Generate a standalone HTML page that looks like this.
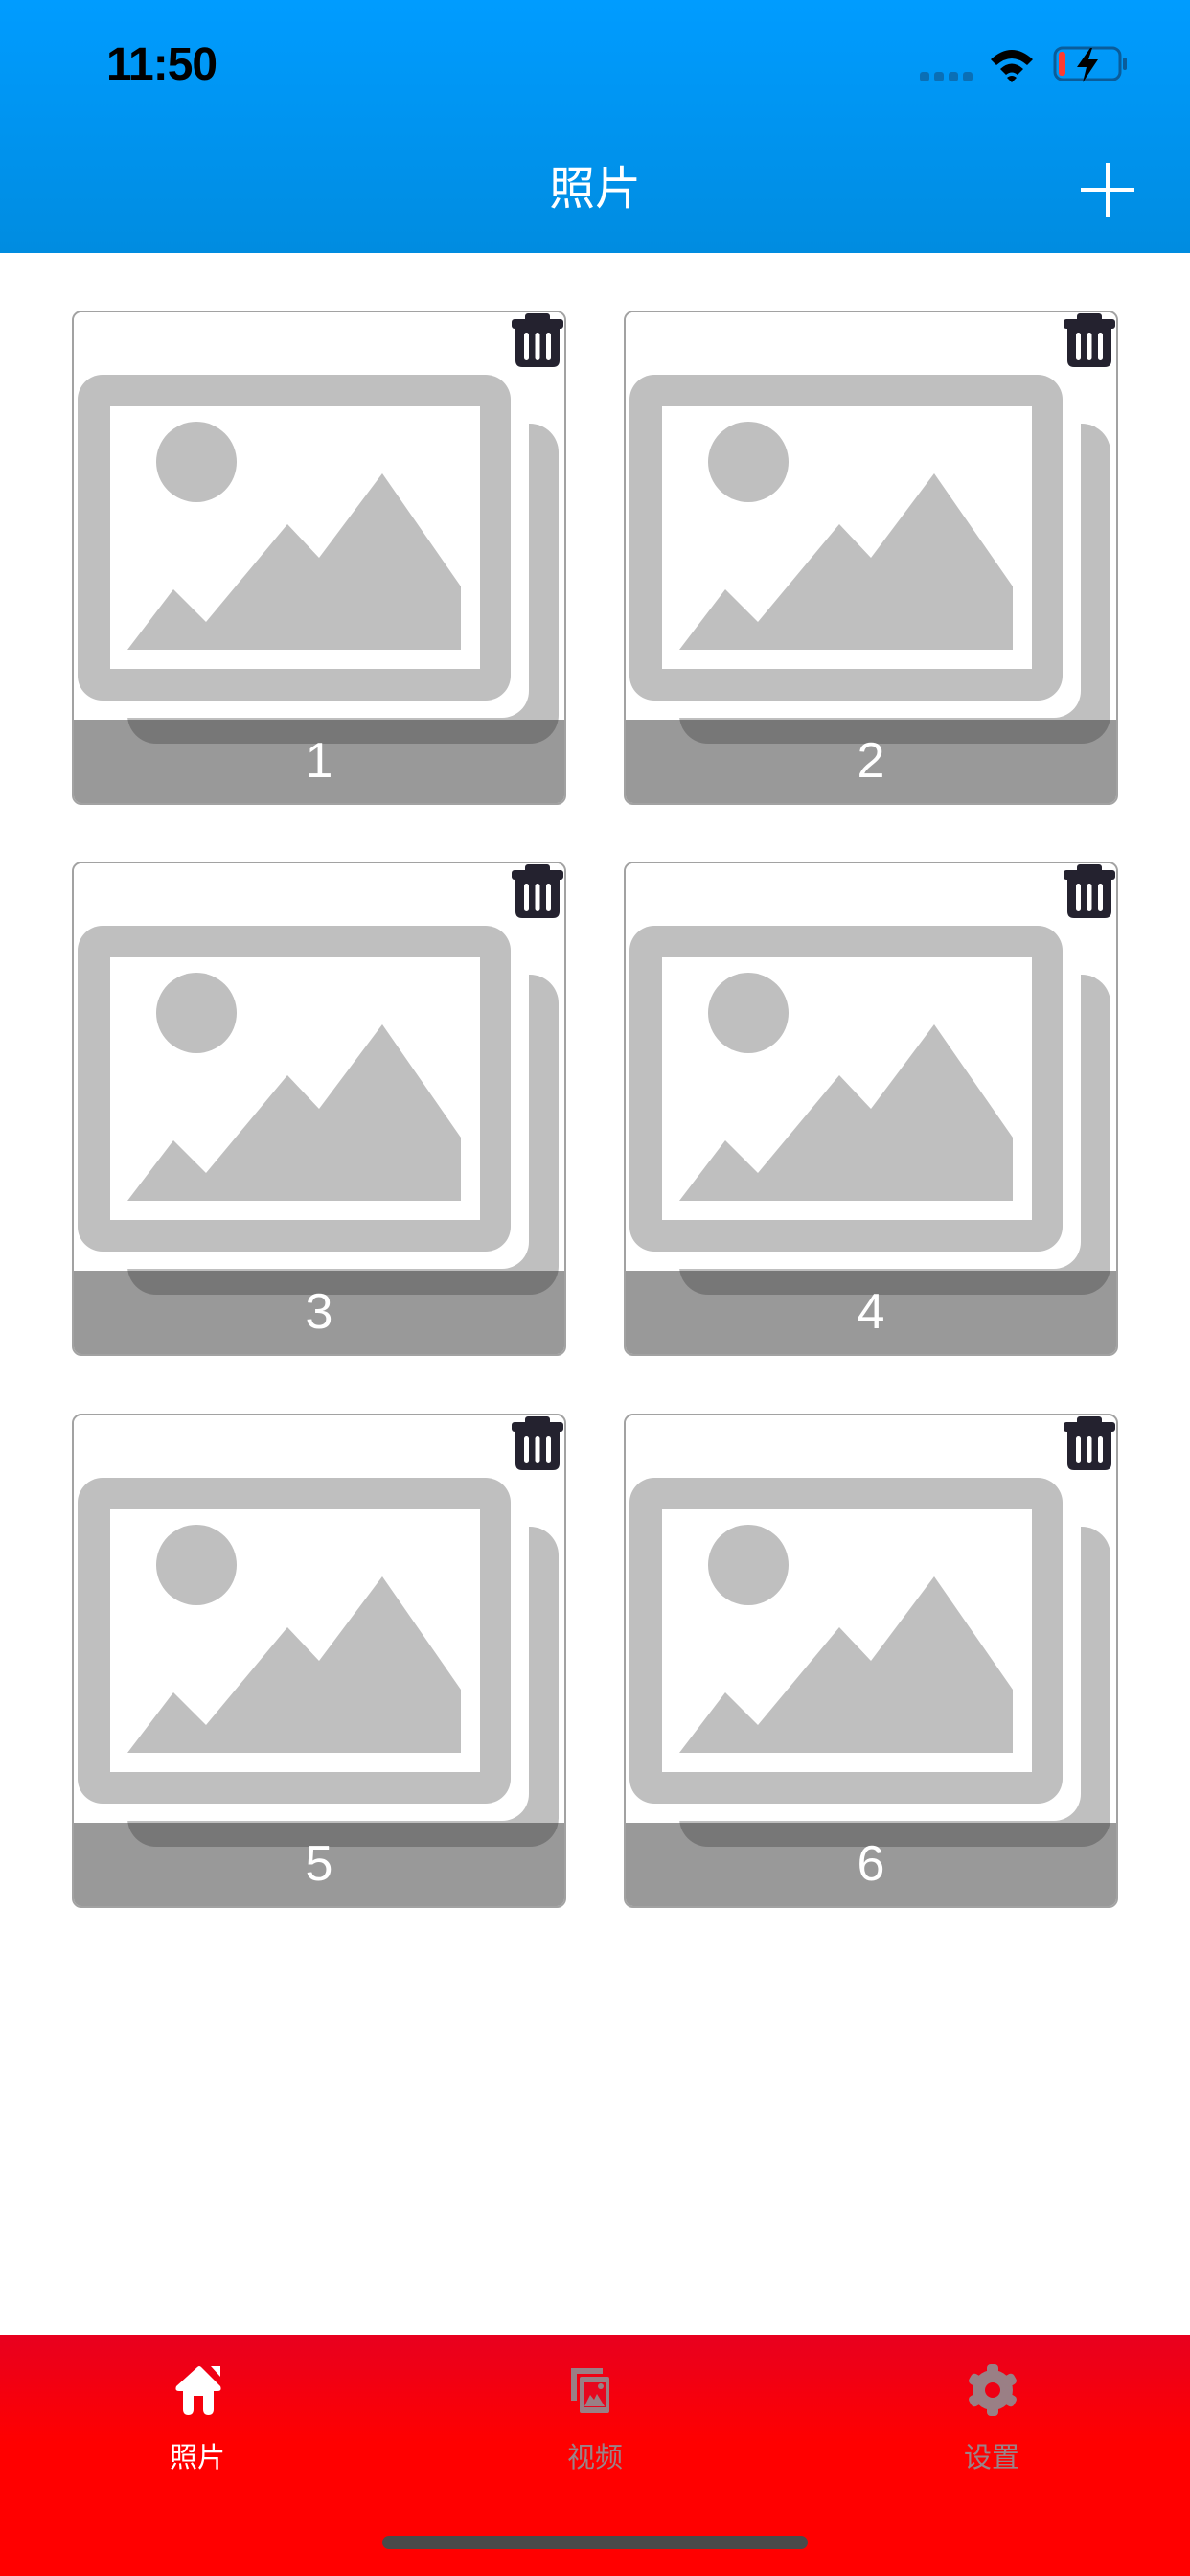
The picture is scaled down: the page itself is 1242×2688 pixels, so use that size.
<!DOCTYPE html>
<html><head><meta charset="utf-8"><style>
*{margin:0;padding:0;box-sizing:border-box}
body{width:1242px;height:2688px;position:relative;background:#fff;overflow:hidden;font-family:"Liberation Sans","Noto Sans CJK SC",sans-serif}
.hdr{position:absolute;left:0;top:0;width:1242px;height:264px;background:linear-gradient(#009cff,#008ce0)}
.time{position:absolute;left:111px;top:40px;font-size:48px;font-weight:bold;color:#000;letter-spacing:-1px}
.title{position:absolute;left:0;width:1242px;top:168px;text-align:center;color:#fff;font-size:48px;line-height:60px}
.card{position:absolute;width:516px;height:516px;border:2px solid #a2a2a2;border-radius:10px;overflow:hidden;background:#fff}
.card svg{position:absolute;left:-2px;top:-2px}
.num{position:absolute;left:0;right:0;top:423px;height:91px;text-align:center;color:#fff;font-size:52px;line-height:91px}
.tab{position:absolute;left:0;top:2436px;width:1242px;height:252px;background:linear-gradient(#e8001f,#ff0000 45%,#ff0000)}
.lbl{position:absolute;top:2545px;width:120px;text-align:center;font-size:29px;line-height:40px}
.bar{position:absolute;left:399px;top:2646px;width:444px;height:14px;border-radius:7px;background:#4a4a4a}
</style></head><body>
<div class="hdr">
<div class="time">11:50</div>
<svg style="position:absolute;left:955px;top:40px" width="230" height="60" viewBox="955 40 230 60">
<g fill="#0a6fb5"><rect x="960" y="75" width="10" height="10" rx="3"/><rect x="975" y="75" width="10" height="10" rx="3"/><rect x="990" y="75" width="10" height="10" rx="3"/><rect x="1005" y="75" width="10" height="10" rx="3"/></g>
<path d="M1034 62 Q1056 42 1078 62 L1072 68 Q1056 54 1040 68Z M1044 72 Q1056 61 1068 72 L1062 78 Q1056 73 1050 78Z M1056 86 L1051 81 Q1056 77 1061 81Z" fill="#000"/>
<rect x="1101" y="50" width="68" height="33" rx="8" fill="none" stroke="#0a5c9a" stroke-width="3"/>
<rect x="1172" y="60" width="4" height="13" rx="2" fill="#0a5c9a"/>
<rect x="1105" y="54" width="7" height="25" rx="3" fill="#ff3b30"/>
<path d="M1138 50 L1124 70 L1134 70 L1130 86 L1146 62 L1136 62 L1140 50Z" fill="#000"/>
</svg>
<div class="title">照片</div>
<svg style="position:absolute;left:1128px;top:170px" width="56" height="56"><rect x="26" y="0" width="4" height="56" fill="#fff"/><rect x="0" y="26" width="56" height="4" fill="#fff"/></svg>
</div>

<svg width="0" height="0" style="position:absolute"><defs>
<g id="ph">
<rect width="516" height="516" fill="#fff"/>
<rect x="58" y="118" width="450" height="334" rx="30" fill="#bfbfbf"/>
<rect x="30" y="55" width="447" height="370" rx="28" fill="#fff"/>
<rect x="6" y="67" width="452" height="340" rx="26" fill="#bfbfbf"/>
<rect x="40" y="100" width="386" height="274" fill="#fff"/>
<circle cx="130" cy="158" r="42" fill="#bfbfbf"/>
<polygon points="58,354 106,291 140,325 225,223 258,258 324,170 406,288 406,354" fill="#bfbfbf"/>
<rect x="0" y="427" width="516" height="95" fill="rgba(38,38,38,0.47)"/>
<g fill="#24222f">
<rect x="473" y="3" width="26" height="9" rx="3"/>
<rect x="459" y="9" width="54" height="10" rx="3"/>
<path d="M463 18 H509 V52 Q509 59 502 59 H470 Q463 59 463 52Z"/>
</g>
<g fill="#fff"><rect x="472" y="23" width="5" height="29" rx="2.5"/><rect x="483.5" y="23" width="5" height="29" rx="2.5"/><rect x="495" y="23" width="5" height="29" rx="2.5"/></g>
</g></defs></svg>

<div class="card" style="left:75px;top:324px"><svg width="516" height="516"><use href="#ph"/></svg><div class="num">1</div></div>
<div class="card" style="left:651px;top:324px"><svg width="516" height="516"><use href="#ph"/></svg><div class="num">2</div></div>
<div class="card" style="left:75px;top:899px"><svg width="516" height="516"><use href="#ph"/></svg><div class="num">3</div></div>
<div class="card" style="left:651px;top:899px"><svg width="516" height="516"><use href="#ph"/></svg><div class="num">4</div></div>
<div class="card" style="left:75px;top:1475px"><svg width="516" height="516"><use href="#ph"/></svg><div class="num">5</div></div>
<div class="card" style="left:651px;top:1475px"><svg width="516" height="516"><use href="#ph"/></svg><div class="num">6</div></div>

<div class="tab"></div>
<svg style="position:absolute;left:180px;top:2466px" width="56" height="56" viewBox="180 2466 56 56">
<path d="M206 2470 Q208 2468 210 2470 L230 2490 Q232 2495 227 2495 L223 2495 L223 2514 Q223 2520 217.5 2520 Q212 2520 212 2514 L212 2500 L202 2500 L202 2514 Q202 2520 196.5 2520 Q191 2520 191 2514 L191 2495 L187 2495 Q182 2495 184 2490Z" fill="#fff"/>
<path d="M220 2469 L230 2469 L230 2480Z" fill="#fff"/>
</svg>
<svg style="position:absolute;left:592px;top:2466px" width="60" height="56" viewBox="592 2466 60 56">
<path d="M596 2471 H629 V2477 H602 V2505 H596Z" fill="#9a7f85"/>
<rect x="605" y="2480" width="31" height="38" rx="2" fill="#9a7f85"/>
<rect x="609" y="2486" width="23" height="26" fill="#e8061e"/>
<path d="M610 2511 L616 2499 L620 2504 L623 2498 L631 2511Z" fill="#9a7f85"/>
<circle cx="627" cy="2490" r="3" fill="#9a7f85"/>
</svg>
<svg style="position:absolute;left:1006px;top:2466px" width="60" height="56" viewBox="0 0 60 56">
<g transform="translate(30,28)">
<g fill="#9a7f85">
<rect x="-6" y="-27" width="12" height="54" rx="4"/>
<rect x="-6" y="-27" width="12" height="54" rx="4" transform="rotate(60)"/>
<rect x="-6" y="-27" width="12" height="54" rx="4" transform="rotate(120)"/>
<circle r="21"/>
</g>
<circle r="8" fill="#ee0014"/>
</g>
</svg>
<div class="lbl" style="left:146px;color:#fff">照片</div>
<div class="lbl" style="left:561px;color:#9a8388">视频</div>
<div class="lbl" style="left:975px;color:#9a8388">设置</div>
<div class="bar"></div>
</body></html>
